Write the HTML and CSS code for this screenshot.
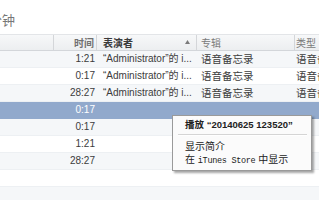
FILE: index.html
```html
<!DOCTYPE html>
<html>
<head>
<meta charset="utf-8">
<link rel="stylesheet" href="styles.css">
</head>
<body>
<div class="page">
  <div class="top"><span class="title">分钟</span></div>
  <div class="list">
    <div class="head">
      <div class="hc"></div>
      <div class="hc time">时间</div>
      <div class="hc artist"><span>表演者</span><svg class="arrow" width="5" height="4" viewBox="0 0 5 4"><path d="M2.5 0 L5 4 L0 4 Z" fill="#7a7a7a"/></svg></div>
      <div class="hc album">专辑</div>
      <div class="hc type">类型</div>
    </div>
    <div class="row odd"><div></div><div class="c time">1:21</div><div class="c artist">“Administrator”的 i...</div><div class="c album">语音备忘录</div><div class="c type">语音备忘录</div></div>
    <div class="row"><div></div><div class="c time">0:17</div><div class="c artist">“Administrator”的 i...</div><div class="c album">语音备忘录</div><div class="c type">语音备忘录</div></div>
    <div class="row odd"><div></div><div class="c time">28:27</div><div class="c artist">“Administrator”的 i...</div><div class="c album">语音备忘录</div><div class="c type">语音备忘录</div></div>
    <div class="row sel"><div></div><div class="c time">0:17</div><div class="c artist"></div><div class="c album"></div><div class="c type"></div></div>
    <div class="row odd"><div></div><div class="c time">0:17</div><div class="c artist"></div><div class="c album"></div><div class="c type"></div></div>
    <div class="row"><div></div><div class="c time">1:21</div><div class="c artist"></div><div class="c album"></div><div class="c type"></div></div>
    <div class="row odd"><div></div><div class="c time">28:27</div><div class="c artist"></div><div class="c album"></div><div class="c type"></div></div>
    <div class="row"></div>
    <div class="row odd"></div>
    <div class="row"></div>
  </div>
  <div class="menu">
    <div class="item def">播放 “20140625 123520”</div>
    <div class="sep"></div>
    <div class="item">显示简介</div>
    <div class="item">在 <span class="mono">iTunes Store</span> 中显示</div>
  </div>
</div>
</body>
</html>
```
FILE: styles.css
```css
html, body {
  margin: 0;
  padding: 0;
}
body {
  width: 319px;
  height: 200px;
  overflow: hidden;
  background: #ffffff;
  font-family: "Liberation Sans", "Noto Sans CJK SC", sans-serif;
}
.page {
  position: relative;
  width: 319px;
  height: 200px;
  overflow: hidden;
}
.top {
  height: 34px;
  box-sizing: border-box;
  padding-top: 12px;
  overflow: hidden;
}
.title {
  display: block;
  margin-left: -11px;
  font-family: "Noto Sans CJK SC", sans-serif;
  font-size: 13px;
  line-height: 16px;
  color: #777;
}
.list {
  display: flex;
  flex-direction: column;
}
.head, .row {
  display: grid;
  grid-template-columns: 54px 43px 100px 98px 1fr;
  height: 17px;
  box-sizing: border-box;
}
.head {
  background: linear-gradient(#f7f8f9, #eceef0);
  border-top: 1px solid #e3e5e8;
  border-bottom: 1px solid #d3d6da;
  font-size: 10px;
  line-height: 15px;
  color: #666;
  font-family: "Noto Sans CJK SC", sans-serif;
}
.hc {
  border-right: 1px solid #d4d6d9;
  white-space: nowrap;
  overflow: hidden;
}
.hc.time {
  text-align: right;
  padding-right: 2px;
  font-weight: bold;
  color: #707070;
}
.hc.artist {
  display: flex;
  align-items: center;
  justify-content: space-between;
  padding: 0 6px 0 6px;
  font-weight: bold;
  color: #3a3a3a;
}
.hc.album {
  padding-left: 4px;
  color: #7a7a7a;
}
.hc.type {
  padding-left: 1px;
  color: #7a7a7a;
  border-right: none;
}
.arrow {
  display: block;
  margin-top: -1px;
}
.row {
  background: #ffffff;
  border-bottom: 1px solid #edf0f3;
  font-size: 10px;
  line-height: 16px;
  color: #3c3c3c;
}
.row.odd {
  background: #f5f7f9;
}
.row.sel {
  background: #91a9cc;
  color: #ffffff;
  border-bottom-color: #91a9cc;
}
.c {
  white-space: nowrap;
  overflow: hidden;
}
.c.time {
  text-align: right;
  padding-right: 2px;
}
.c.artist {
  padding-left: 6px;
}
.c.album {
  padding-left: 4px;
  font-family: "Noto Sans CJK SC", sans-serif;
  font-size: 10.5px;
}
.c.type {
  padding-left: 1px;
  font-family: "Noto Sans CJK SC", sans-serif;
  font-size: 10.5px;
}
.menu {
  position: absolute;
  left: 172px;
  top: 115px;
  width: 140px;
  height: 56px;
  box-sizing: border-box;
  border: 1px solid #9a9a9a;
  background: #fbfbfb;
  box-shadow: 2px 2px 2px rgba(0, 0, 0, 0.35);
  padding-top: 2px;
  font-family: "Liberation Sans", "Noto Sans CJK SC", sans-serif;
  font-size: 10px;
  color: #222;
}
.item {
  height: 13px;
  line-height: 13px;
  padding-left: 12px;
  white-space: nowrap;
}
.item.def {
  height: 14px;
  line-height: 14px;
  font-weight: bold;
  font-size: 9.5px;
}
.sep {
  margin: 2px 4px 4px 5px;
  height: 1px;
  background: #d5d5d5;
  border-bottom: 1px solid #ffffff;
}
.mono {
  font-family: "Liberation Mono", monospace;
  font-size: 8.5px;
  letter-spacing: -0.3px;
}
```
